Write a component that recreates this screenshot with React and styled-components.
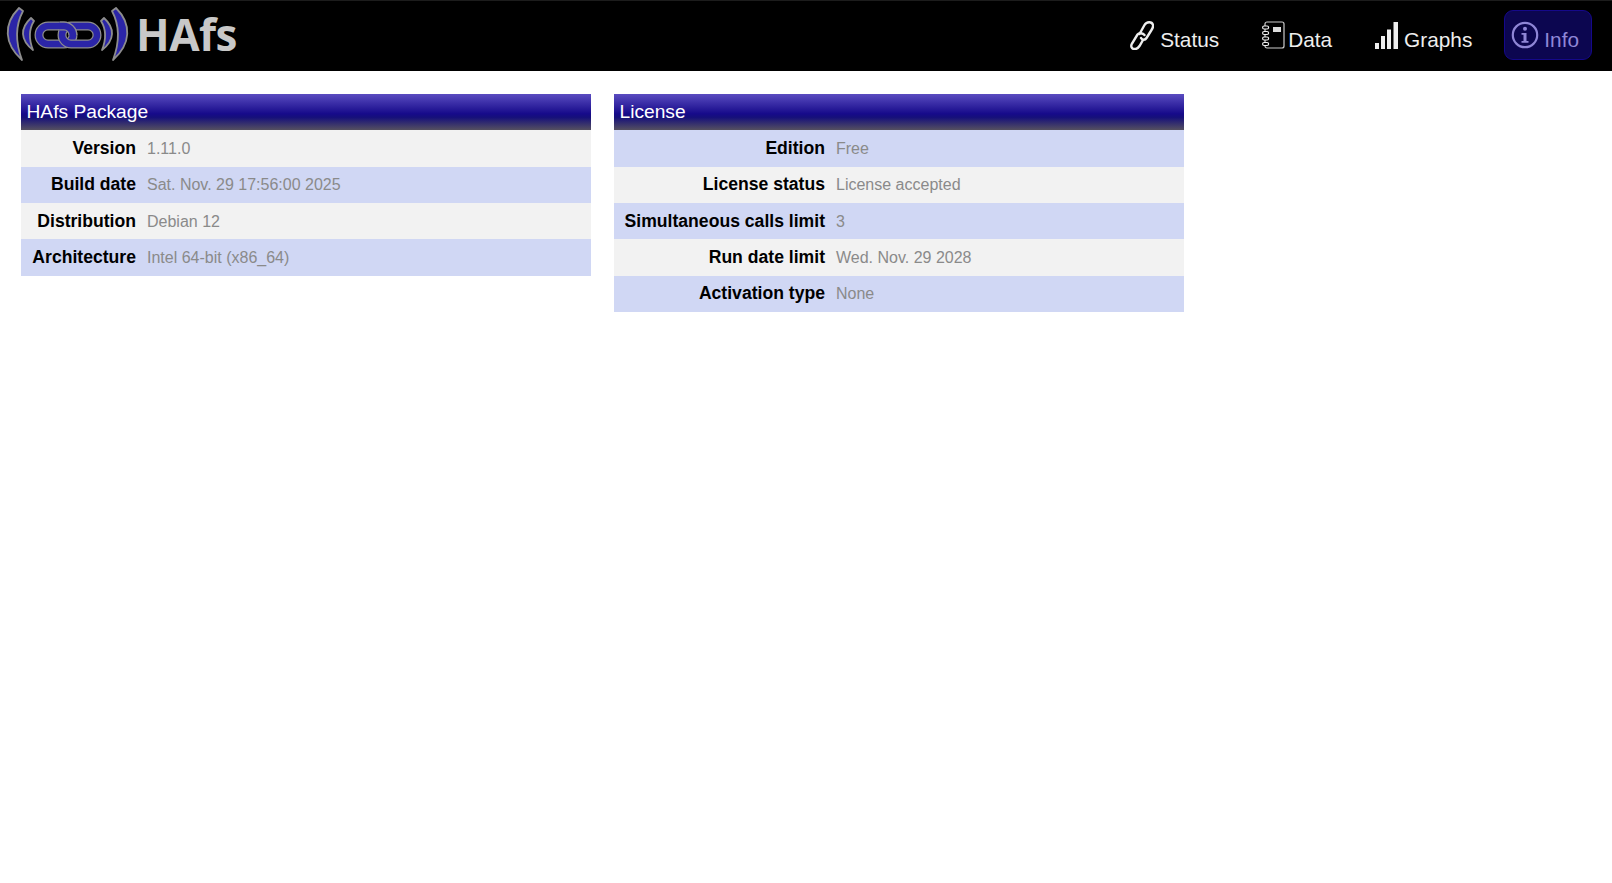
import React from 'react';
import styled, { createGlobalStyle } from 'styled-components';

const Global = createGlobalStyle`
  html, body { margin: 0; padding: 0; background: #fff; }
  body { font-family: "Liberation Sans", Arial, sans-serif; }
`;

const TopBar = styled.header`
  height: 71px;
  box-sizing: border-box;
  background: #000;
  border-top: 1px solid #1c1c1c;
  display: flex;
  align-items: flex-start;
  justify-content: space-between;
`;

const Brand = styled.div`
  display: flex;
  align-items: center;
  height: 66px;
  padding-left: 6px;
`;

const BrandName = styled.span`
  font-family: "Open Sans", "Noto Sans", sans-serif;
  font-weight: 700;
  font-size: 44px;
  line-height: 64px;
  letter-spacing: -0.5px;
  color: #c8c8c8;
  margin-left: 6px;
`;

const Nav = styled.nav`
  display: flex;
  align-items: flex-start;
  margin-top: 9px;
  margin-right: 20px;
  gap: 43px;
`;

const NavItem = styled.a`
  display: flex;
  align-items: center;
  box-sizing: border-box;
  height: 50px;
  padding: ${p => (p.$active ? '0 12px 0 6px' : '0')};
  margin-left: ${p => (p.$active ? '-11px' : '0')};
  color: ${p => (p.$active ? '#8f86d6' : '#eee')};
  background: ${p => (p.$active ? '#0c0650' : 'transparent')};
  border: ${p => (p.$active ? '1px solid #15088a' : 'none')};
  border-radius: 9px;
  font-size: 20.8px;
`;

const NavLabel = styled.span`
  margin-top: 10px;
  margin-left: ${p => p.$gap}px;
`;

const Content = styled.main`
  display: flex;
  align-items: flex-start;
  gap: 23px;
  padding: 23px 21px 0;
`;

const Panel = styled.section`
  width: 570px;
`;

const PanelTitle = styled.h2`
  margin: 0;
  height: 36.2px;
  box-sizing: border-box;
  padding-left: 5.5px;
  font-size: 19.2px;
  font-weight: 400;
  line-height: 36px;
  color: #fff;
  background: linear-gradient(to bottom, #5a4cc0 0%, #160a8a 55%, #16107a 65%, #555060 100%);
`;

const Row = styled.div`
  display: grid;
  grid-template-columns: ${p => p.$label}px 1fr;
  column-gap: 11px;
  height: 36.4px;
  align-items: center;
  background: ${p => (p.$tint ? '#d0d7f4' : '#f2f2f2')};
`;

const Label = styled.span`
  font-size: 17.6px;
  font-weight: 700;
  text-align: right;
  color: #000;
  white-space: nowrap;
`;

const Value = styled.span`
  padding-top: 1px;
  font-size: 16px;
  color: #8a8a8a;
  white-space: nowrap;
`;

const crescents = [
  'M19 8 C3 24 4 44 22 60 C16 44 15 26 23 11 Z',
  'M31 18 C20 28 20 40 33 50 C29 40 29 29 34 21 Z',
  'M116 8 C132 24 131 44 113 60 C119 44 120 26 112 11 Z',
  'M104 18 C115 28 115 40 102 50 C106 40 106 29 101 21 Z',
];

const Logo = () => (
  <svg width="124" height="60" viewBox="6 4 124 60" fill="none">
    {crescents.map(d => (
      <path key={d} d={d} fill="#2b25a8" stroke="#8d8d8d" strokeWidth="1.8" strokeLinejoin="round" />
    ))}
    <rect x="39" y="26" width="34" height="18" rx="9" stroke="#8d8d8d" strokeWidth="9" />
    <rect x="39" y="26" width="34" height="18" rx="9" stroke="#2b25a8" strokeWidth="6.5" />
    <rect x="62" y="26" width="35" height="18" rx="9" stroke="#8d8d8d" strokeWidth="9" />
    <rect x="62" y="26" width="35" height="18" rx="9" stroke="#2b25a8" strokeWidth="6.5" />
    <path d="M60 26 H64 C69 26 73 30 73 35" stroke="#8d8d8d" strokeWidth="9" />
    <path d="M59 26 H64 C69 26 73 30 73 36" stroke="#2b25a8" strokeWidth="6.5" />
  </svg>
);

const ChainIcon = () => (
  <svg width="24" height="30" viewBox="0 0 24 30" fill="none" stroke="#eee" strokeWidth="2.4" strokeLinecap="round">
    <path d="M9.5 14 L14.5 5 C16.5 1.5 22 1 23 5 C23.5 7 22.5 8.5 21.5 10 L16.5 18 C15 20.5 12 20 11 18" />
    <path d="M14.5 15 C13 13 9 12.5 7.5 14.5 L2 23.5 C0 27 2.5 29.5 5.5 29 C7.5 28.8 8.5 27.5 9.5 26 L13 20" />
  </svg>
);

const NotebookIcon = () => (
  <svg width="23" height="28" viewBox="0 0 23 28" fill="none" stroke="#ccc" strokeWidth="1.2">
    <rect x="3" y="1" width="19" height="26" rx="2" />
    <rect x="11" y="6" width="8" height="5" fill="#ddd" stroke="none" />
    {[5, 10.5, 16, 21.5].map(y => (
      <rect key={y} x="0.6" y={y} width="6" height="3" rx="1.5" fill="#000" stroke="#eee" />
    ))}
  </svg>
);

const BarsIcon = () => (
  <svg width="23" height="27" viewBox="0 0 23 27" fill="#eee">
    <rect x="0" y="21" width="4" height="6" />
    <rect x="6" y="14" width="4" height="13" />
    <rect x="12" y="7.5" width="4" height="19.5" />
    <rect x="18.5" y="0" width="4.5" height="27" />
  </svg>
);

const InfoIcon = () => (
  <svg width="28" height="28" viewBox="0 0 28 28" fill="none">
    <circle cx="14" cy="14" r="12.2" stroke="#8f86d6" strokeWidth="2.2" />
    <circle cx="14" cy="7.8" r="2" fill="#8f86d6" />
    <path d="M10.5 12 H15.5 V20 H17.5 V21.8 H10.5 V20 H12.5 V13.8 H10.5 Z" fill="#8f86d6" />
  </svg>
);

const InfoTable = ({ title, labelWidth, startTint, rows }) => (
  <Panel>
    <PanelTitle>{title}</PanelTitle>
    {rows.map(([label, value], i) => (
      <Row key={label} $label={labelWidth} $tint={i % 2 === (startTint ? 0 : 1)}>
        <Label>{label}</Label>
        <Value>{value}</Value>
      </Row>
    ))}
  </Panel>
);

export default function App() {
  return (
    <>
      <Global />
      <TopBar>
        <Brand>
          <Logo />
          <BrandName>HAfs</BrandName>
        </Brand>
        <Nav>
          <NavItem><ChainIcon /><NavLabel $gap={6}>Status</NavLabel></NavItem>
          <NavItem><NotebookIcon /><NavLabel $gap={3}>Data</NavLabel></NavItem>
          <NavItem><BarsIcon /><NavLabel $gap={6}>Graphs</NavLabel></NavItem>
          <NavItem $active><InfoIcon /><NavLabel $gap={5}>Info</NavLabel></NavItem>
        </Nav>
      </TopBar>
      <Content>
        <InfoTable
          title="HAfs Package"
          labelWidth={115}
          rows={[
            ['Version', '1.11.0'],
            ['Build date', 'Sat. Nov. 29 17:56:00 2025'],
            ['Distribution', 'Debian 12'],
            ['Architecture', 'Intel 64-bit (x86_64)'],
          ]}
        />
        <InfoTable
          title="License"
          labelWidth={211}
          startTint
          rows={[
            ['Edition', 'Free'],
            ['License status', 'License accepted'],
            ['Simultaneous calls limit', '3'],
            ['Run date limit', 'Wed. Nov. 29 2028'],
            ['Activation type', 'None'],
          ]}
        />
      </Content>
    </>
  );
}
